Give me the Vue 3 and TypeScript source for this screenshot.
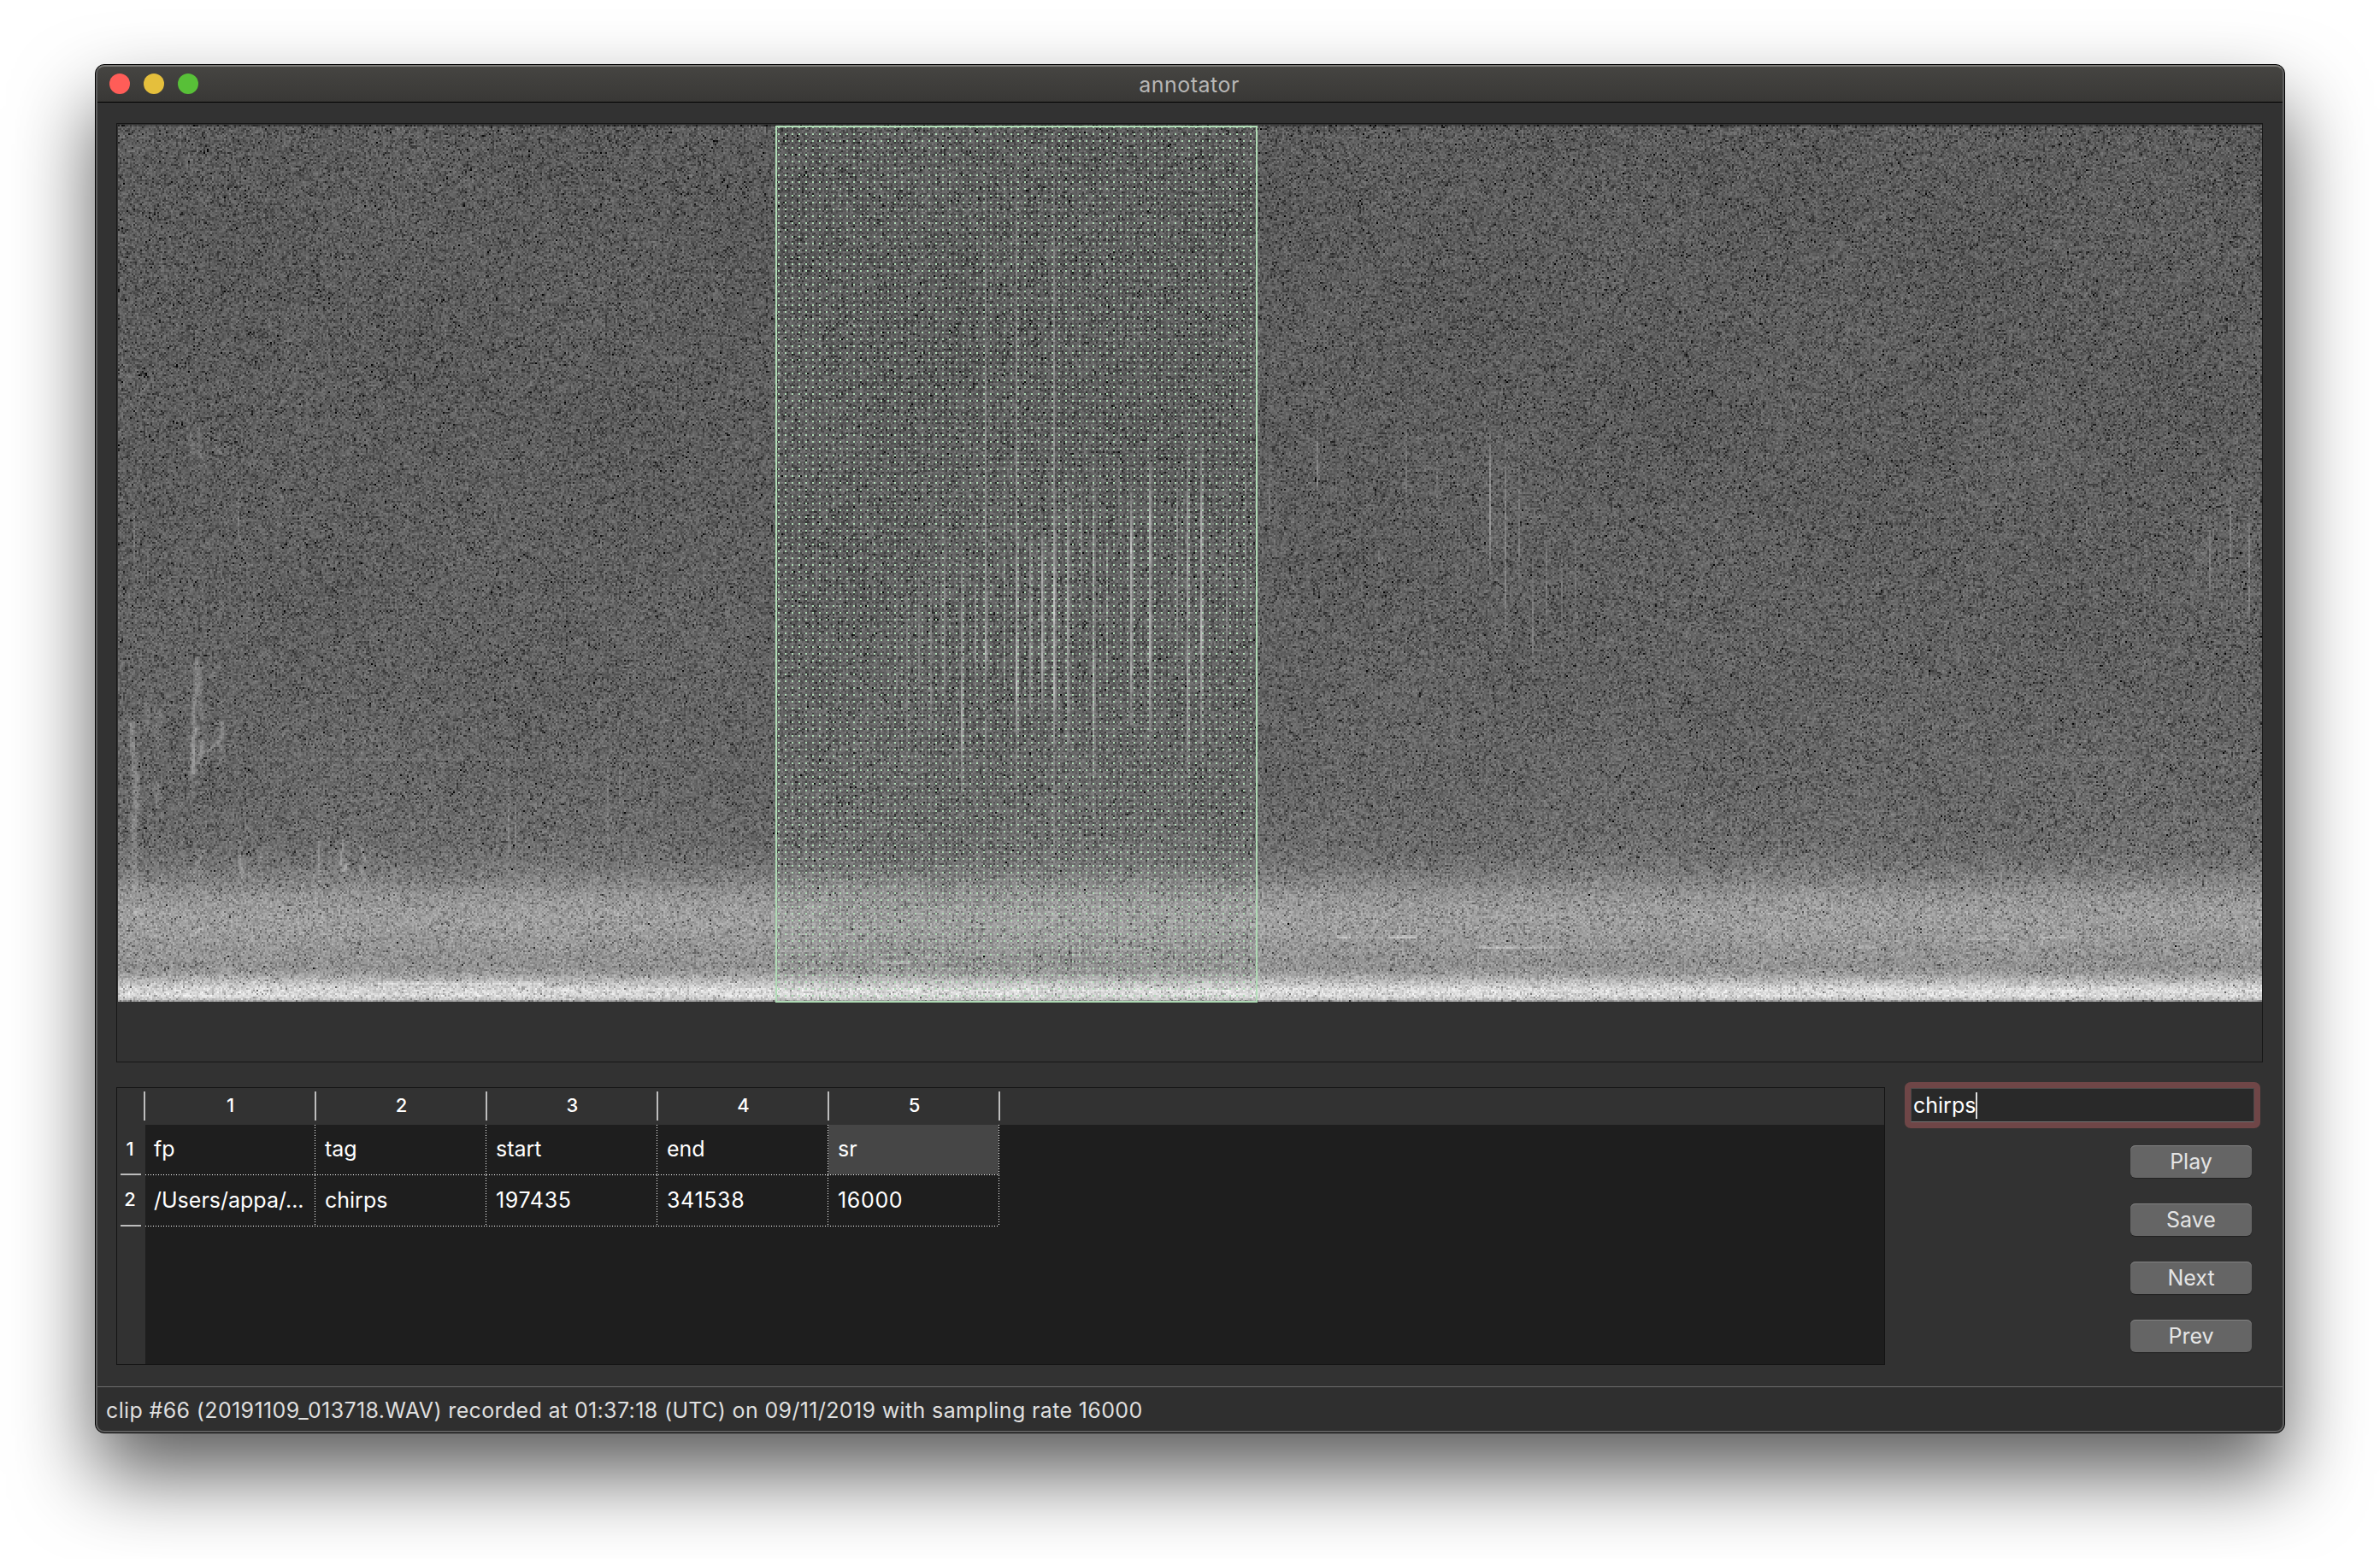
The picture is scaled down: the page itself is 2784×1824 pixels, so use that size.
<script setup lang="ts">
import { onMounted, ref } from 'vue'

const columns: string[] = ['1', '2', '3', '4', '5']
const rows: string[][] = [
  ['fp', 'tag', 'start', 'end', 'sr'],
  ['/Users/appa/...', 'chirps', '197435', '341538', '16000'],
]
const buttons: string[] = ['Play', 'Save', 'Next', 'Prev']

const W = 1254
const H = 513
const OX = 138
const OY = 146
const canvas = ref<HTMLCanvasElement | null>(null)

// [window y, mean grey level] of the background noise
const profile: [number, number][] = [
  [146, 62], [148, 91], [500, 93], [800, 98], [930, 103], [990, 109], [1012, 117],
  [1030, 131], [1046, 147], [1065, 156], [1085, 156], [1110, 148], [1130, 145], [1138, 155],
  [1148, 188], [1156, 212], [1164, 216], [1168, 196], [1172, 125],
]

// click trains: x, y start, y end, strength
const clicks: [number, number, number, number][] = [
  [955, 610, 710, 28], [972, 620, 700, 14], [1020, 600, 720, 20], [1048, 650, 840, 28], [1060, 680, 890, 34],
  [1074, 640, 890, 34], [1088, 660, 860, 42], [1101, 610, 800, 34], [1105, 610, 840, 54], [1125, 620, 960, 62],
  [1141, 650, 810, 48], [1153, 120, 1010, 46], [1153, 670, 800, 76], [1175, 590, 840, 44],
  [1189, 100, 1080, 52], [1189, 600, 880, 86], [1204, 600, 860, 66], [1219, 600, 850, 70],
  [1233, 100, 1100, 54], [1233, 560, 880, 100], [1249, 540, 900, 70], [1264, 560, 720, 36],
  [1279, 530, 960, 72], [1294, 600, 820, 46], [1309, 510, 630, 30], [1323, 540, 870, 80],
  [1345, 490, 900, 72], [1376, 530, 790, 54], [1389, 470, 960, 62], [1405, 480, 900, 72],
  [1435, 530, 800, 34], [1457, 520, 740, 36], [1485, 540, 640, 24], [1540, 490, 590, 36],
  [1645, 490, 600, 22], [1680, 510, 600, 24], [1742, 495, 690, 48], [1760, 500, 780, 44],
  [1776, 560, 680, 26], [1792, 660, 800, 32], [1808, 610, 750, 28], [1826, 640, 730, 22],
  [1842, 600, 780, 18], [2350, 520, 620, 14], [2440, 590, 660, 18], [2585, 590, 720, 30],
  [2608, 560, 680, 34], [2631, 580, 770, 34], [2568, 620, 690, 18], [278, 570, 630, 26],
  [520, 350, 430, 14], [710, 880, 1000, 26], [725, 880, 960, 20], [700, 800, 870, 14],
  [594, 880, 1010, 26], [603, 930, 1020, 20], [157, 580, 680, 24], [172, 620, 690, 14],
]

// call contours: strength, half width, polyline points
const contours: [number, number, [number, number][]][] = [
  [44, 2, [[155, 845], [156, 880], [159, 920], [158, 950], [156, 970]]],
  [24, 2, [[156, 970], [157, 1010], [158, 1040]]],
  [16, 2, [[172, 820], [173, 855]]],
  [22, 2, [[184, 830], [185, 865]]],
  [26, 2, [[183, 915], [185, 945]]],
  [50, 1, [[230, 770], [231, 790], [229, 812], [226, 835], [227, 850], [230, 852]]],
  [70, 1, [[230, 852], [226, 862], [226, 880], [225, 905]]],
  [24, 1, [[225, 905], [224, 940]]],
  [38, 1, [[235, 780], [234, 810], [236, 840]]],
  [52, 1, [[236, 866], [236, 880], [231, 892]]],
  [50, 1, [[244, 878], [252, 872], [259, 862], [260, 845]]],
  [36, 1, [[246, 793], [254, 781]]],
  [30, 1, [[257, 825], [262, 818]]],
  [20, 1, [[258, 870], [264, 890]]],
  [34, 1, [[226, 1020], [232, 1008], [238, 995]]],
  [48, 0, [[280, 1000], [282, 1015], [284, 1030]]],
  [34, 1, [[303, 1010], [305, 990]]],
  [46, 0, [[373, 985], [372, 1000], [373, 1030]]],
  [54, 0, [[401, 980], [399, 1010]]],
  [70, 1, [[402, 1018], [406, 1010]]],
  [46, 0, [[421, 990], [428, 1008]]],
  [44, 0, [[420, 1012], [427, 1028]]],
  [36, 0, [[222, 505], [226, 525], [234, 530], [240, 545]]],
  [28, 0, [[232, 500], [234, 545]]],
  [28, 0, [[252, 520], [257, 530]]],
  [34, 1, [[157, 1070], [163, 1062]]],
  [38, 1, [[225, 1095], [235, 1085]]],
]

// tonal streaks: x start, x end, y, strength
const tones: [number, number, number, number][] = [
  [1565, 1580, 1097, 46], [1580, 1625, 1097, 18], [1625, 1656, 1097, 46], [1730, 1765, 1108, 42], [1765, 1800, 1108, 30],
  [1800, 1830, 1108, 20], [1850, 1905, 1108, 16], [2170, 2195, 1108, 22], [2300, 2350, 1099, 24], [2385, 2420, 1097, 24],
  [1030, 1064, 1126, 34], [1070, 1110, 1120, 20], [1280, 1335, 1110, 22], [905, 980, 1112, 14],
  [250, 905, 889, 8], [905, 1469, 889, 5], [2300, 2640, 889, 8], [2310, 2560, 886, 7],
  [440, 640, 1150, 22], [640, 2646, 1158, 8],
]

function level(y: number): number {
  for (let i = 1; i < profile.length; i++) {
    const [y1, v1] = profile[i]
    if (y <= y1) {
      const [y0, v0] = profile[i - 1]
      return v0 + ((v1 - v0) * (y - y0)) / (y1 - y0)
    }
  }
  return profile[profile.length - 1][1]
}

onMounted(() => {
  const ctx = canvas.value?.getContext('2d')
  if (!ctx) return
  let seed = 20191109
  const rand = (): number => {
    seed = (seed + 0x6d2b79f5) | 0
    let t = Math.imul(seed ^ (seed >>> 15), 1 | seed)
    t = (t + Math.imul(t ^ (t >>> 7), 61 | t)) ^ t
    return ((t ^ (t >>> 14)) >>> 0) / 4294967296
  }
  const signal = new Float32Array(W * H)
  const add = (px: number, py: number, v: number) => {
    const x = Math.floor((px - OX) / 2)
    const y = Math.floor((py - OY) / 2)
    if (x < 0 || y < 0 || x >= W || y >= H) return
    const i = y * W + x
    if (v > signal[i]) signal[i] = v
  }
  for (const [x, a, b, s] of clicks) {
    let wobble = 1
    for (let y = a; y < b; y += 2) {
      const t = (y - a) / (b - a)
      wobble += (rand() - 0.5) * 0.2 + (0.92 - wobble) * 0.08
      const v = s * Math.min(1, Math.min(t, 1 - t) * 3.5) * wobble
      add(x, y, v)
      if (s > 55) add(x + 2, y, v * 0.45)
    }
  }
  for (const [s, half, pts] of contours) {
    for (let k = 1; k < pts.length; k++) {
      const [x0, y0] = pts[k - 1]
      const [x1, y1] = pts[k]
      const n = Math.ceil(Math.hypot(x1 - x0, y1 - y0))
      for (let j = 0; j <= n; j++) {
        const x = x0 + ((x1 - x0) * j) / n
        const y = y0 + ((y1 - y0) * j) / n
        for (let o = -half - 2; o <= half + 2; o += 2) {
          add(x + o, y, s * (Math.abs(o) <= half ? 0.8 : 0.3) * (0.6 + rand() * 0.4))
        }
      }
    }
  }
  for (const [a, b, y, s] of tones) {
    for (let x = a; x < b; x += 2) {
      add(x, y, s)
      add(x, y - 2, s * 0.5)
    }
  }
  const image = ctx.createImageData(W, H)
  for (let y = 0; y < H; y++) {
    const base = level(OY + y * 2)
    for (let x = 0; x < W; x++) {
      const i = y * W + x
      const s = signal[i]
      const drift = Math.sin(x * 0.043 + y * 0.021) + Math.sin(x * 0.019 - y * 0.037)
      const spread = 15 * (1 - Math.min(0.7, s / 90))
      const g = base + s * 0.95 + drift + spread * (Math.log(-Math.log(1 - rand() * 0.99999) + 1e-6) + 0.45)
      const v = Math.max(0, Math.min(250, g))
      image.data[i * 4] = v
      image.data[i * 4 + 1] = v
      image.data[i * 4 + 2] = v
      image.data[i * 4 + 3] = 255
    }
  }
  ctx.putImageData(image, 0, 0)
})
</script>

<template>
  <div class="desktop">
    <main class="window">
      <header class="titlebar">
        <div class="lights">
          <i class="light red"></i>
          <i class="light yellow"></i>
          <i class="light green"></i>
        </div>
        <span class="title">annotator</span>
      </header>

      <div class="content">
        <section class="spectrogram">
          <canvas ref="canvas" :width="W" :height="H"></canvas>
          <svg class="selection" width="564" height="1026" shape-rendering="crispEdges">
            <defs>
              <pattern id="dots" width="8" height="8" x="3" y="1" patternUnits="userSpaceOnUse">
                <rect width="2" height="2" fill="#b0dcb6" />
              </pattern>
            </defs>
            <rect width="564" height="1026" fill="url(#dots)" />
            <rect x="1" y="1" width="562" height="1024" fill="none" stroke="#b0dcb6" stroke-width="2" />
          </svg>
        </section>

        <div class="lower">
          <section class="table">
            <div class="head">
              <div v-for="c in columns" :key="c" class="hcell">{{ c }}</div>
            </div>
            <div class="body">
              <div class="side">
                <div v-for="(r, i) in rows" :key="i" class="scell">{{ i + 1 }}</div>
              </div>
              <div class="grid">
                <div v-for="(r, i) in rows" :key="i" class="row">
                  <div
                    v-for="(c, j) in r"
                    :key="j"
                    class="cell"
                    :class="{ selected: i === 0 && j === 4, num: i === 1 && j > 1 }"
                  >{{ c }}</div>
                </div>
              </div>
            </div>
          </section>

          <aside class="controls">
            <div class="field"><div class="inner"><span>chirps</span><i class="caret"></i></div></div>
            <button v-for="b in buttons" :key="b" class="btn">{{ b }}</button>
          </aside>
        </div>
      </div>

      <footer class="status">clip #66 (20191109_013718.WAV) recorded at 01:37:18 (UTC) on 09/11/2019 with sampling rate 16000</footer>
    </main>
  </div>
</template>

<style>
body {
  margin: 0;
  background: #fff;
}
</style>

<style scoped>
* {
  box-sizing: border-box;
}
.desktop {
  width: 2784px;
  height: 1824px;
  padding: 75px 111px;
  overflow: hidden;
  background: #fff;
  font-family: Inter, "Liberation Sans", sans-serif;
  font-size: 25px;
  color: #fff;
}
.window {
  position: relative;
  display: flex;
  flex-direction: column;
  width: 2562px;
  height: 1602px;
  border: 1px solid #000;
  border-radius: 11px;
  background: #323232;
  overflow: hidden;
  box-shadow: 0 48px 94px rgba(0, 0, 0, 0.64);
}
.window::after {
  content: "";
  position: absolute;
  inset: 0;
  border: 2px solid #5f5f5f;
  border-top-color: #7b7a77;
  border-radius: 10px;
  pointer-events: none;
}
.titlebar {
  display: flex;
  align-items: center;
  height: 44px;
  border-bottom: 1px solid #000;
  background: linear-gradient(#464542, #393836);
}
.lights {
  display: flex;
  gap: 16px;
  width: 200px;
  padding-left: 16px;
}
.light {
  width: 24px;
  height: 24px;
  border-radius: 50%;
}
.red { background: #ff5d58; }
.yellow { background: #e5bf3c; }
.green { background: #58c038; }
.title {
  flex: 1;
  margin-right: 202px;
  padding-top: 2px;
  text-align: center;
  color: #b7b6b5;
  letter-spacing: 0.5px;
}
.content {
  height: 1502px;
  padding: 24px;
}
.spectrogram {
  position: relative;
  width: 2511px;
  height: 1099px;
  padding: 1px;
  border: 1px solid #171717;
}
canvas {
  display: block;
  width: 2508px;
  height: 1026px;
  image-rendering: pixelated;
}
.selection {
  position: absolute;
  left: 770px;
  top: 2px;
}
.lower {
  display: flex;
  align-items: flex-start;
  gap: 23px;
  padding-top: 23px;
}
.table {
  width: 2069px;
  height: 325px;
  margin-top: 6px;
  border: 1px solid #141414;
  background: #1e1e1e;
}
.head {
  display: flex;
  height: 43px;
  padding: 4px 0 5px 31px;
  background: #323232;
  font-size: 22px;
  font-weight: 500;
}
.hcell {
  width: 200px;
  height: 34px;
  padding-left: 1px;
  border-left: 2px solid #bdbdbd;
  line-height: 33px;
  text-align: center;
}
.hcell:last-child {
  width: 202px;
  border-right: 2px solid #bdbdbd;
}
.body {
  display: flex;
  height: 280px;
}
.side {
  width: 33px;
  padding-left: 4px;
  background: #323232;
  font-size: 22px;
  font-weight: 500;
}
.scell {
  width: 24px;
  height: 60px;
  padding-right: 2px;
  border-bottom: 2px solid #bdbdbd;
  line-height: 57px;
  text-align: center;
}
.scell:first-child {
  height: 59px;
}
.row {
  display: flex;
  height: 60px;
  background: repeating-linear-gradient(90deg, #fff 0 1px, #1e1e1e 1px 3px) 0 100% / 999px 1px no-repeat;
}
.row:first-child {
  height: 59px;
}
.cell {
  width: 200px;
  margin-bottom: 1px;
  padding-left: 11px;
  line-height: 57px;
  background: repeating-linear-gradient(#fff 0 1px, #1e1e1e 1px 3px) 100% 0 / 1px 100% no-repeat;
  white-space: nowrap;
}
.cell:first-child {
  width: 199px;
  padding-left: 10px;
}
.row:last-child .cell {
  line-height: 58px;
}
.num {
  letter-spacing: 0.65px;
}
.selected {
  background-color: #464646;
}
.controls {
  display: flex;
  flex-direction: column;
  align-items: flex-end;
  gap: 30px;
  width: 416px;
}
.field {
  width: 416px;
  height: 54px;
  margin-bottom: -10px;
  padding: 7px;
  border-radius: 7px;
  background: #6f4647;
}
.inner {
  display: flex;
  align-items: center;
  height: 40px;
  padding-left: 2px;
  border: 1px solid #4d4a4a;
  border-bottom-color: #757171;
  background: #292929;
}
.caret {
  width: 2px;
  height: 31px;
  background: #ddd;
}
.btn {
  width: 142px;
  height: 38px;
  margin-right: 10px;
  padding: 0;
  border: 0;
  border-radius: 6px;
  background: #656565;
  box-shadow: inset 0 1px #828282, 0 1px 1px rgba(0, 0, 0, 0.35);
  color: #e4e4e4;
  font: inherit;
  line-height: 38px;
  text-align: center;
}
.status {
  height: 54px;
  padding-left: 12px;
  border-top: 1px solid #6d6d6d;
  background: #2f2f2f;
  color: #dfdfdf;
  line-height: 55px;
  letter-spacing: 0.36px;
  white-space: nowrap;
}
</style>
